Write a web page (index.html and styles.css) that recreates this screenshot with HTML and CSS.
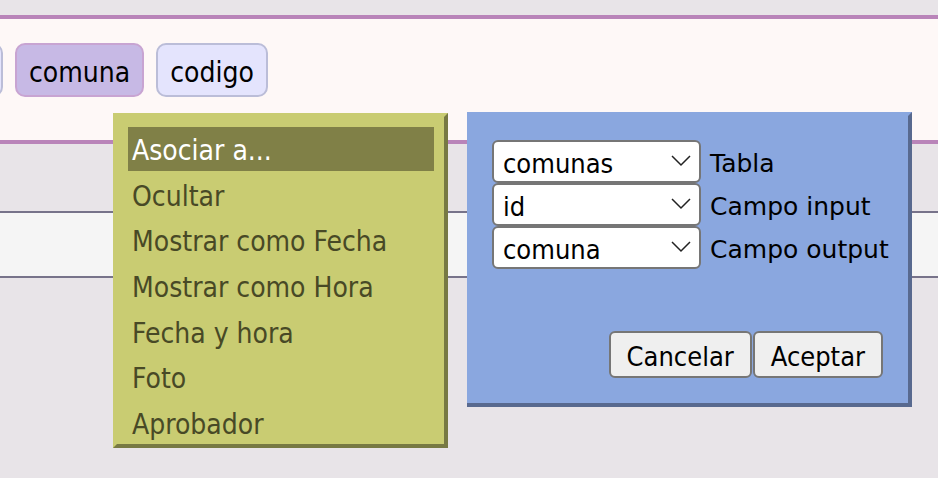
FILE: index.html
```html
<!DOCTYPE html>
<html lang="es">
<head>
<meta charset="utf-8">
<meta name="viewport" content="width=device-width, initial-scale=1">
<title>Campos</title>
<link rel="stylesheet" href="styles.css">
</head>
<body>
<main class="page">
  <section class="fields">
    <span class="field field-edge"></span>
    <button type="button" class="field field-active">comuna</button>
    <button type="button" class="field">codigo</button>
  </section>
  <section class="row"></section>

  <ul class="menu">
    <li><button type="button" class="item item-active">Asociar a...</button></li>
    <li><button type="button" class="item">Ocultar</button></li>
    <li><button type="button" class="item">Mostrar como Fecha</button></li>
    <li><button type="button" class="item">Mostrar como Hora</button></li>
    <li><button type="button" class="item">Fecha y hora</button></li>
    <li><button type="button" class="item">Foto</button></li>
    <li><button type="button" class="item">Aprobador</button></li>
  </ul>

  <form class="dialog">
    <div class="options">
      <div class="option">
        <span class="picker">
          <select id="tabla"><option>comunas</option></select>
          <svg class="chevron" viewBox="0 0 20 12"><path d="M1 1 L10 10 L19 1"/></svg>
        </span>
        <label for="tabla">Tabla</label>
      </div>
      <div class="option">
        <span class="picker">
          <select id="entrada"><option>id</option></select>
          <svg class="chevron" viewBox="0 0 20 12"><path d="M1 1 L10 10 L19 1"/></svg>
        </span>
        <label for="entrada">Campo input</label>
      </div>
      <div class="option">
        <span class="picker">
          <select id="salida"><option>comuna</option></select>
          <svg class="chevron" viewBox="0 0 20 12"><path d="M1 1 L10 10 L19 1"/></svg>
        </span>
        <label for="salida">Campo output</label>
      </div>
    </div>
    <div class="actions">
      <button type="button" class="action">Cancelar</button>
      <button type="button" class="action">Aceptar</button>
    </div>
  </form>
</main>
</body>
</html>
```
FILE: styles.css
```css
* {
  box-sizing: border-box;
}

body {
  margin: 0;
  background: #e8e4e8;
  color: #000;
}

body,
button,
select {
  font-family: Tahoma, "DejaVu Sans Condensed", "DejaVu Sans", sans-serif;
  font-stretch: condensed;
  font-size: 27px;
}

.page {
  position: relative;
  min-height: 100vh;
  padding-top: 15px;
  overflow: hidden;
}

.fields {
  display: flex;
  align-items: flex-start;
  gap: 12px;
  padding: 24px 0 43px;
  border: solid #b984b9;
  border-width: 4px 0;
  background: #fef8f7;
}

.field {
  height: 54px;
  padding: 4px 12px 0;
  border: 2px solid #bbbdd8;
  border-radius: 10px;
  background: #e4e4fd;
  color: #000;
  font-size: 28px;
}

.field-edge {
  width: 28px;
  margin-left: -25px;
}

.field-active {
  border-color: #c8a4d2;
  background: #c7b9e5;
}

.row {
  height: 67px;
  margin-top: 67px;
  border: solid #77738a;
  border-width: 2px 0;
  background: #f5f5f5;
}

.menu {
  position: absolute;
  left: 113px;
  top: 113px;
  display: grid;
  grid-auto-rows: 1fr;
  gap: 2px;
  width: 335px;
  height: 335px;
  margin: 0;
  padding: 10px 10px 0 11px;
  border: 4px solid #777943;
  border-top-color: #c9cc72;
  border-left-color: #c9cc72;
  background: #c9cc72;
  list-style: none;
}

.item {
  display: block;
  width: 100%;
  height: 100%;
  padding: 4px 4px 0;
  border: 0;
  background: transparent;
  color: #484926;
  font-size: 28px;
  text-align: left;
}

.item-active {
  background: #808047;
  color: #fff;
}

.dialog {
  position: absolute;
  left: 467px;
  top: 112px;
  width: 445px;
  padding: 24px 25px 25px;
  border: solid #58698f;
  border-width: 4px 4px 4px 0;
  border-top-color: #8aa7df;
  background: #8aa7df;
}

.option {
  display: flex;
  align-items: center;
  gap: 9px;
  height: 43px;
  font-family: Verdana, "DejaVu Sans", sans-serif;
  font-stretch: normal;
  font-size: 25px;
  white-space: nowrap;
}

.option label {
  padding-top: 4px;
}

.picker {
  position: relative;
  flex: none;
  width: 209px;
}

select {
  display: block;
  appearance: none;
  width: 100%;
  height: 43px;
  padding: 4px 9px 0;
  border: 2px solid #767676;
  border-radius: 6px;
  background: #fff;
  color: #000;
}

.chevron {
  position: absolute;
  right: 10px;
  top: 15px;
  width: 20px;
  height: 12px;
  fill: none;
  stroke: #222;
  stroke-width: 1.5;
  pointer-events: none;
}

.actions {
  display: flex;
  justify-content: flex-end;
  gap: 1px;
  margin-top: 62px;
}

.action {
  height: 47px;
  padding: 4px 16px 0;
  border: 2px solid #767676;
  border-radius: 6px;
  background: #efefef;
  color: #000;
}
```
